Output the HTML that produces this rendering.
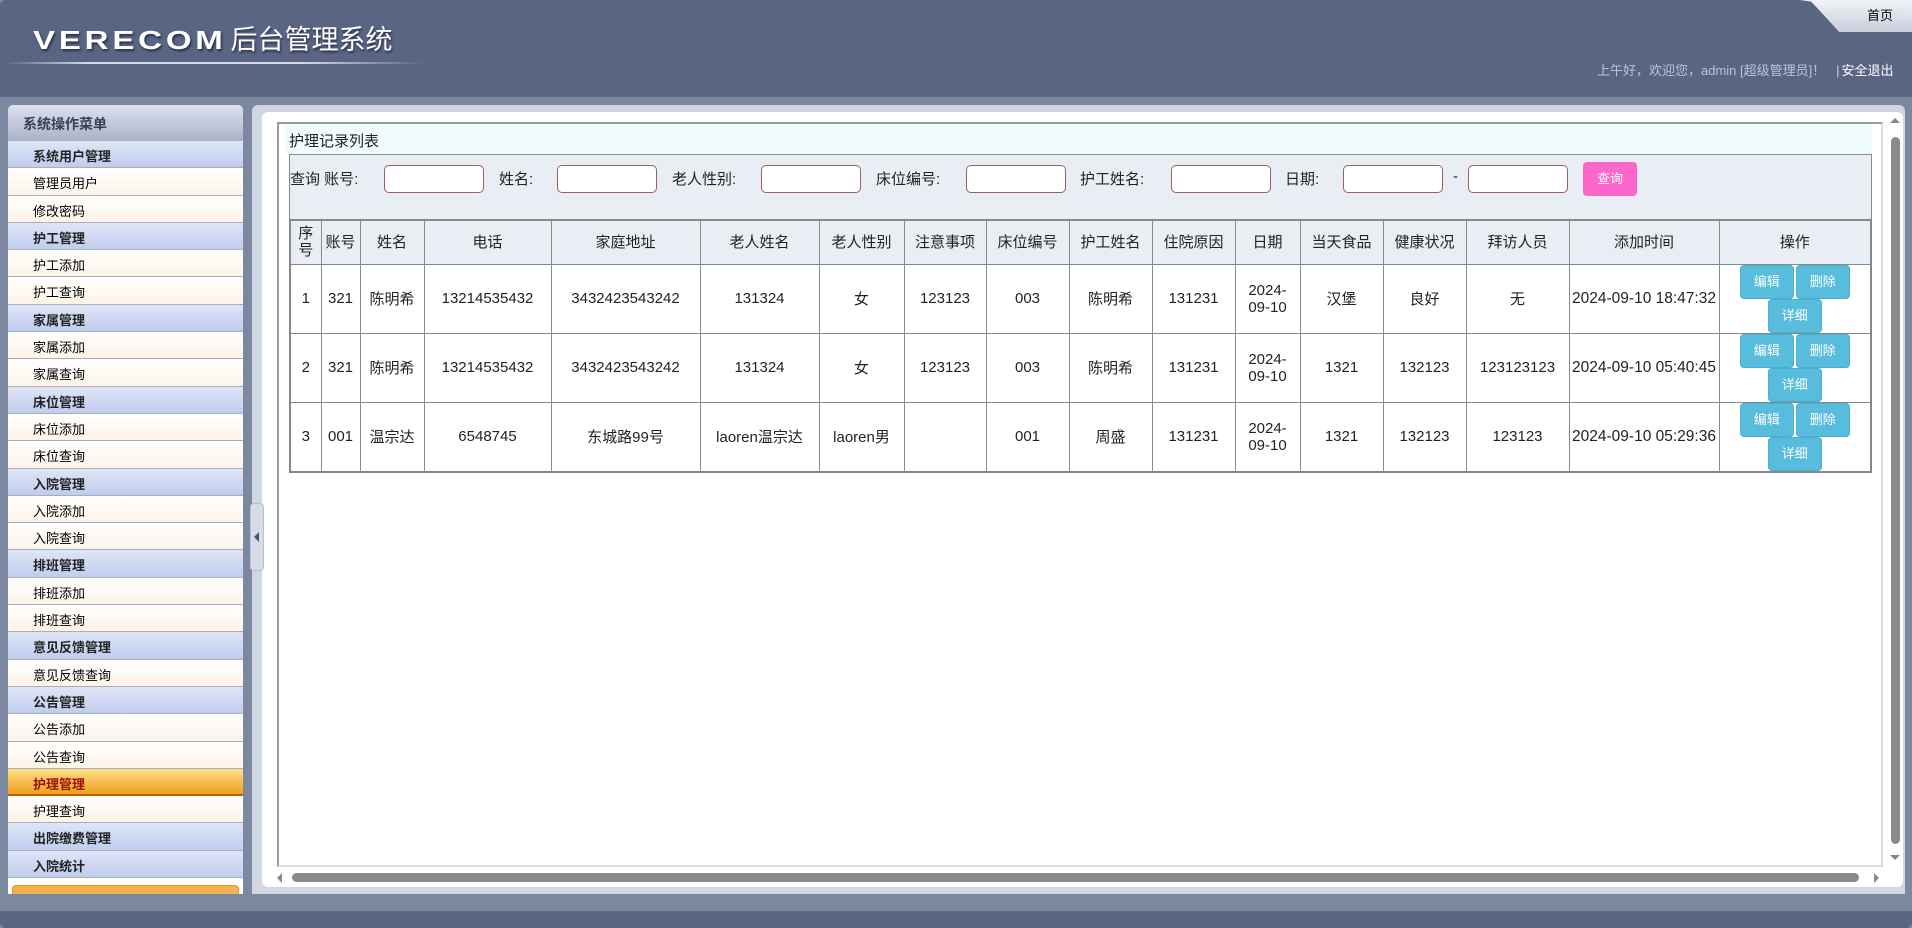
<!DOCTYPE html>
<html><head><meta charset="utf-8">
<style>
*{margin:0;padding:0;box-sizing:border-box}
body{width:1912px;height:928px;background:#7b88a0;font-family:"Liberation Sans","Noto Sans CJK SC",sans-serif;position:relative;overflow:hidden}
.hdr{position:absolute;left:0;top:0;width:1912px;height:97px;background:#5a6584;border-radius:6px 6px 0 0}
.logo{position:absolute;left:33px;top:18px;color:#fff;font-size:27px;text-shadow:1px 2px 2px #2a3048;white-space:nowrap}
.logo b{font-family:"Liberation Sans",sans-serif;font-weight:bold;letter-spacing:3px;font-size:26px;transform:scaleX(1.27);display:inline-block;transform-origin:left;margin-right:45px}
.hline{position:absolute;left:5px;top:62px;width:420px;height:2px;background:linear-gradient(90deg,rgba(255,255,255,0),#d8dcea 20%,#d8dcea 70%,rgba(255,255,255,0))}
.home{position:absolute;left:1800px;top:0;width:112px;height:32px;background:linear-gradient(#f2f4f8,#c7cddb);border-radius:0 0 0 14px;clip-path:polygon(0 0,100% 0,100% 100%,35% 100%,22% 50%,10% 5%)}
.home span{position:absolute;left:67px;top:5px;font-size:13px;color:#000}
.wel{position:absolute;left:1597px;top:60px;font-size:13px;color:#b8c4dc;white-space:nowrap}
.wel b{font-weight:normal;color:#fff;margin-left:12px}
.side{position:absolute;left:8px;top:105px;width:235px;height:789px;background:#fff;border-radius:5px 5px 0 0;overflow:hidden}
.st{height:36px;background:linear-gradient(#dde1ee,#a9b2c9);font-size:14px;font-weight:bold;color:#3a4050;padding:9px 0 0 15px}
.it{height:27.3px;border-bottom:1px solid #a7aebc;font-size:13px;padding:5px 0 0 25px;color:#000;background:linear-gradient(#fff,#fdf3e8)}
.it.h{background:linear-gradient(#dfe5f6,#bfcdee);color:#222;font-weight:bold}
.it.a{background:linear-gradient(#ffe08a,#eea01c);color:#a0100a;font-weight:bold;border-bottom:2px solid #c06010}
.ob{position:absolute;left:4px;top:780px;width:227px;height:12px;background:#f6b04c;border:1px solid #e09030;border-radius:4px}
.main{position:absolute;left:252px;top:105px;width:1653px;height:789px;background:#d0d6e2;border-radius:6px 6px 0 0}
.white{position:absolute;left:262px;top:112px;width:1641px;height:775px;background:#fff;border-radius:6px}
.tab{position:absolute;left:250px;top:503px;width:14px;height:68px;background:#d6dbe6;border:1px solid #b8c0d0;border-radius:4px}
.tab:after{content:"";position:absolute;left:3px;top:28px;border:5px solid transparent;border-right:5px solid #4a5470;border-left:0}
.frame{position:absolute;left:277px;top:122px;width:1606px;height:745px;border:2px solid #999;border-bottom:2px solid #ddd;border-right:2px solid #ddd}
.ttl{position:absolute;left:285px;top:124px;width:1587px;height:30px;background:#f0fbfd;font-size:15px;padding:6px 0 0 4px;color:#222}
.srch{position:absolute;left:289px;top:154px;width:1583px;height:66px;background:#e9edf4;border:1px solid #888;border-bottom:none}
.lb{position:absolute;top:168px;font-size:15px;color:#222;white-space:nowrap}
.inp{position:absolute;top:165px;width:100px;height:28px;background:#fff;border:1px solid #9a6060;border-radius:5px}
.btn{position:absolute;left:1583px;top:162px;width:54px;height:34px;background:#fd66cb;border-radius:4px;color:#fff;font-size:13px;text-align:center;line-height:34px}
table{position:absolute;left:289px;top:219px;border-collapse:collapse;font-size:15px;color:#222;border:2px solid #888}
td,th{border:1px solid #888;text-align:center;font-weight:normal;padding:0}
th{background:#e9edf4;height:44px;line-height:17px}
td{height:69px;background:#fff}
.b{display:inline-block;width:54px;height:34px;line-height:32px;background:#58bddc;border:1px solid #4aaed0;border-radius:4px;color:#fff;font-size:13px;margin:0 1px}
.vs{position:absolute;left:1891px;top:137px;width:9px;height:707px;background:#8a8a8a;border-radius:5px}
.hs{position:absolute;left:292px;top:873px;width:1567px;height:9px;background:#8a8a8a;border-radius:5px}
.ar{position:absolute;width:0;height:0;border:5px solid transparent}
.foot{position:absolute;left:0;top:911px;width:1912px;height:17px;background:#5a6584;border-radius:0 0 6px 6px}
</style></head><body>
<div class="hdr">
<div class="logo"><b>VERECOM</b>后台管理系统</div>
<div class="hline"></div>
<div class="home"><span>首页</span></div>
<div class="wel">上午好，欢迎您，admin [超级管理员]！&nbsp;&nbsp;&nbsp;<span style="color:#ccd">|</span><b style="margin-left:2px">安全退出</b></div>
</div>
<div class="side">
<div class="st">系统操作菜单</div>
<div class="it h">系统用户管理</div><div class="it">管理员用户</div><div class="it">修改密码</div>
<div class="it h">护工管理</div><div class="it">护工添加</div><div class="it">护工查询</div>
<div class="it h">家属管理</div><div class="it">家属添加</div><div class="it">家属查询</div>
<div class="it h">床位管理</div><div class="it">床位添加</div><div class="it">床位查询</div>
<div class="it h">入院管理</div><div class="it">入院添加</div><div class="it">入院查询</div>
<div class="it h">排班管理</div><div class="it">排班添加</div><div class="it">排班查询</div>
<div class="it h">意见反馈管理</div><div class="it">意见反馈查询</div>
<div class="it h">公告管理</div><div class="it">公告添加</div><div class="it">公告查询</div>
<div class="it a">护理管理</div><div class="it">护理查询</div>
<div class="it h">出院缴费管理</div><div class="it h">入院统计</div>
<div class="ob"></div>
</div>
<div class="main"></div>
<div class="white"></div>
<div class="tab"></div>
<div class="frame"></div>
<div class="ttl">护理记录列表</div>
<div class="srch"></div>
<div class="lb" style="left:290px">查询 账号:</div><div class="inp" style="left:384px"></div>
<div class="lb" style="left:499px">姓名:</div><div class="inp" style="left:557px"></div>
<div class="lb" style="left:672px">老人性别:</div><div class="inp" style="left:761px"></div>
<div class="lb" style="left:876px">床位编号:</div><div class="inp" style="left:966px"></div>
<div class="lb" style="left:1080px">护工姓名:</div><div class="inp" style="left:1171px"></div>
<div class="lb" style="left:1285px">日期:</div><div class="inp" style="left:1343px"></div>
<div class="lb" style="left:1453px">-</div><div class="inp" style="left:1468px"></div>
<div class="btn">查询</div>
<table>
<colgroup><col style="width:31px"><col style="width:39px"><col style="width:64px"><col style="width:127px"><col style="width:149px"><col style="width:119px"><col style="width:85px"><col style="width:82px"><col style="width:83px"><col style="width:83px"><col style="width:83px"><col style="width:65px"><col style="width:83px"><col style="width:83px"><col style="width:103px"><col style="width:150px"><col style="width:152px"></colgroup>
<tr><th>序<br>号</th><th>账号</th><th>姓名</th><th>电话</th><th>家庭地址</th><th>老人姓名</th><th>老人性别</th><th>注意事项</th><th>床位编号</th><th>护工姓名</th><th>住院原因</th><th>日期</th><th>当天食品</th><th>健康状况</th><th>拜访人员</th><th>添加时间</th><th>操作</th></tr>
<tr><td>1</td><td>321</td><td>陈明希</td><td>13214535432</td><td>3432423543242</td><td>131324</td><td>女</td><td>123123</td><td>003</td><td>陈明希</td><td>131231</td><td>2024-<br>09-10</td><td>汉堡</td><td>良好</td><td>无</td><td style="font-size:15.5px">2024-09-10 18:47:32</td><td><span class="b">编辑</span><span class="b">删除</span><br><span class="b">详细</span></td></tr>
<tr><td>2</td><td>321</td><td>陈明希</td><td>13214535432</td><td>3432423543242</td><td>131324</td><td>女</td><td>123123</td><td>003</td><td>陈明希</td><td>131231</td><td>2024-<br>09-10</td><td>1321</td><td>132123</td><td>123123123</td><td style="font-size:15.5px">2024-09-10 05:40:45</td><td><span class="b">编辑</span><span class="b">删除</span><br><span class="b">详细</span></td></tr>
<tr><td>3</td><td>001</td><td>温宗达</td><td>6548745</td><td>东城路99号</td><td>laoren温宗达</td><td>laoren男</td><td></td><td>001</td><td>周盛</td><td>131231</td><td>2024-<br>09-10</td><td>1321</td><td>132123</td><td>123123</td><td style="font-size:15.5px">2024-09-10 05:29:36</td><td><span class="b">编辑</span><span class="b">删除</span><br><span class="b">详细</span></td></tr>
</table>
<div class="vs"></div>
<div class="ar" style="left:1890px;top:118px;border-bottom-color:#888;border-top:0"></div>
<div class="ar" style="left:1890px;top:855px;border-top-color:#888;border-bottom:0"></div>
<div class="hs"></div>
<div class="ar" style="left:277px;top:873px;border-right-color:#888;border-left:0"></div>
<div class="ar" style="left:1874px;top:873px;border-left-color:#888;border-right:0"></div>
<div class="foot"></div>
</body></html>
